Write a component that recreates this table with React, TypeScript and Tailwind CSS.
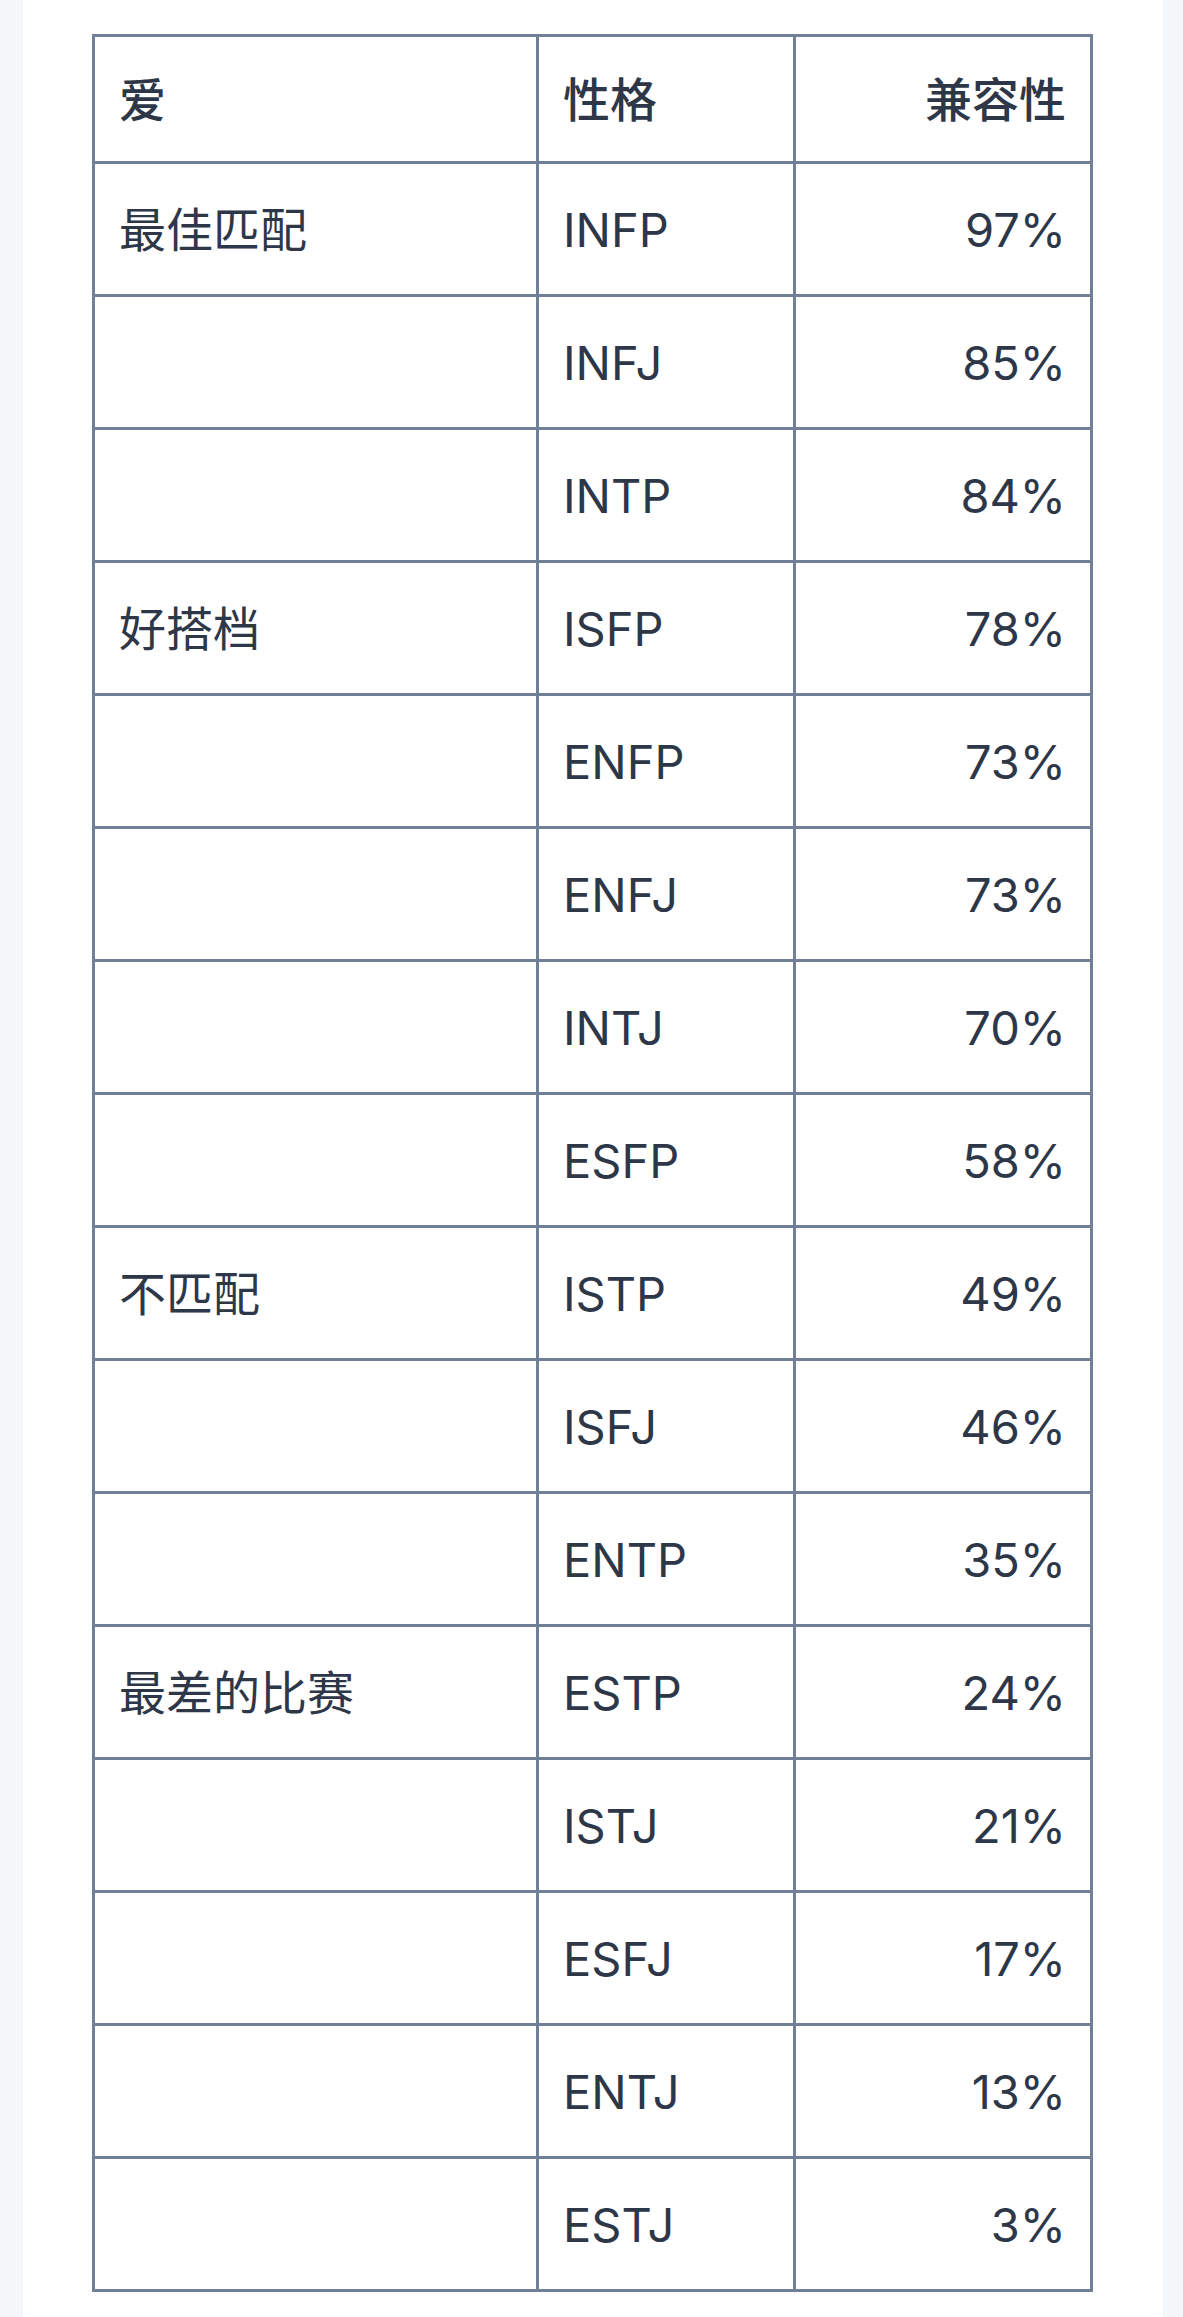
const rows: [string, string, string][] = [
  ["最佳匹配", "INFP", "97%"],
  ["", "INFJ", "85%"],
  ["", "INTP", "84%"],
  ["好搭档", "ISFP", "78%"],
  ["", "ENFP", "73%"],
  ["", "ENFJ", "73%"],
  ["", "INTJ", "70%"],
  ["", "ESFP", "58%"],
  ["不匹配", "ISTP", "49%"],
  ["", "ISFJ", "46%"],
  ["", "ENTP", "35%"],
  ["最差的比赛", "ESTP", "24%"],
  ["", "ISTJ", "21%"],
  ["", "ESFJ", "17%"],
  ["", "ENTJ", "13%"],
  ["", "ESTJ", "3%"],
];

export default function App() {
  return (
    <div
      className="flex min-h-[2317px] w-full bg-[#f5f8fa] text-[#2d3748]"
      style={{ fontFamily: '"Inter", "Noto Sans CJK SC", sans-serif' }}
    >
      <div className="w-[23px] shrink-0" />
      <main className="flex-1 bg-white pl-[69px] pr-[70px] pt-[34px]">
        <table className="w-[998px] table-fixed border-collapse text-[47px] leading-none">
          <colgroup>
            <col className="w-[444px]" />
            <col className="w-[257px]" />
            <col className="w-[297px]" />
          </colgroup>
          <thead>
            <tr className="h-[127px]">
              <th className="border-[3px] border-[#718096] px-[24px] text-left font-medium">爱</th>
              <th className="border-[3px] border-[#718096] px-[24px] text-left font-medium">性格</th>
              <th className="border-[3px] border-[#718096] px-[24px] text-right font-medium">兼容性</th>
            </tr>
          </thead>
          <tbody>
            {rows.map(([label, type, pct], i) => (
              <tr key={i} className="h-[133px]">
                <td className="border-[3px] border-[#718096] px-[24px] text-left">{label}</td>
                <td className="border-[3px] border-[#718096] px-[24px] text-left">{type}</td>
                <td className="border-[3px] border-[#718096] px-[24px] text-right">{pct}</td>
              </tr>
            ))}
          </tbody>
        </table>
      </main>
      <div className="w-[23px] shrink-0" />
    </div>
  );
}
